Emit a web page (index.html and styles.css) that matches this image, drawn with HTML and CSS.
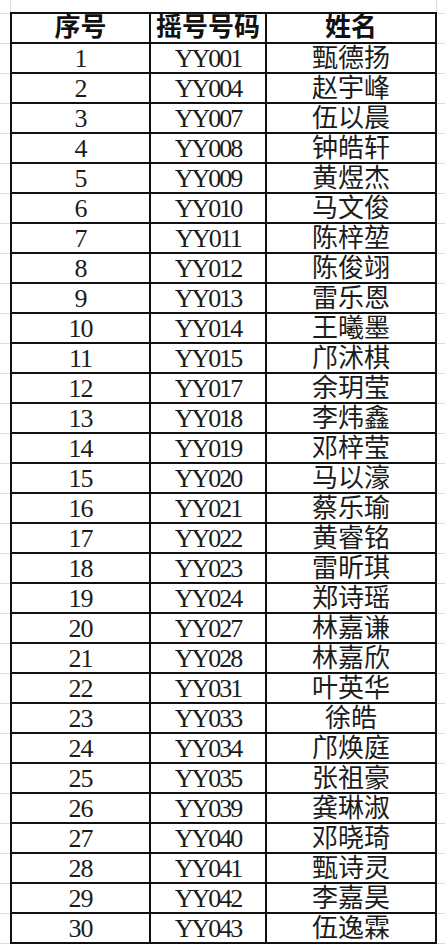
FILE: index.html
```html
<!DOCTYPE html>
<html lang="zh">
<head>
<meta charset="utf-8">
<link rel="stylesheet" href="styles.css">
</head>
<body>
<div class="sheet">
  <div class="roster">
    <div class="cell head">序号</div><div class="cell head">摇号号码</div><div class="cell head">姓名</div>
    <div class="cell num">1</div><div class="cell code">YY001</div><div class="cell name">甄德扬</div>
    <div class="cell num">2</div><div class="cell code">YY004</div><div class="cell name">赵宇峰</div>
    <div class="cell num">3</div><div class="cell code">YY007</div><div class="cell name">伍以晨</div>
    <div class="cell num">4</div><div class="cell code">YY008</div><div class="cell name">钟皓轩</div>
    <div class="cell num">5</div><div class="cell code">YY009</div><div class="cell name">黄煜杰</div>
    <div class="cell num">6</div><div class="cell code">YY010</div><div class="cell name">马文俊</div>
    <div class="cell num">7</div><div class="cell code">YY011</div><div class="cell name">陈梓堃</div>
    <div class="cell num">8</div><div class="cell code">YY012</div><div class="cell name">陈俊翊</div>
    <div class="cell num">9</div><div class="cell code">YY013</div><div class="cell name">雷乐恩</div>
    <div class="cell num">10</div><div class="cell code">YY014</div><div class="cell name">王曦墨</div>
    <div class="cell num">11</div><div class="cell code">YY015</div><div class="cell name">邝沭棋</div>
    <div class="cell num">12</div><div class="cell code">YY017</div><div class="cell name">余玥莹</div>
    <div class="cell num">13</div><div class="cell code">YY018</div><div class="cell name">李炜鑫</div>
    <div class="cell num">14</div><div class="cell code">YY019</div><div class="cell name">邓梓莹</div>
    <div class="cell num">15</div><div class="cell code">YY020</div><div class="cell name">马以濠</div>
    <div class="cell num">16</div><div class="cell code">YY021</div><div class="cell name">蔡乐瑜</div>
    <div class="cell num">17</div><div class="cell code">YY022</div><div class="cell name">黄睿铭</div>
    <div class="cell num">18</div><div class="cell code">YY023</div><div class="cell name">雷昕琪</div>
    <div class="cell num">19</div><div class="cell code">YY024</div><div class="cell name">郑诗瑶</div>
    <div class="cell num">20</div><div class="cell code">YY027</div><div class="cell name">林嘉谦</div>
    <div class="cell num">21</div><div class="cell code">YY028</div><div class="cell name">林嘉欣</div>
    <div class="cell num">22</div><div class="cell code">YY031</div><div class="cell name">叶英华</div>
    <div class="cell num">23</div><div class="cell code">YY033</div><div class="cell name">徐皓</div>
    <div class="cell num">24</div><div class="cell code">YY034</div><div class="cell name">邝焕庭</div>
    <div class="cell num">25</div><div class="cell code">YY035</div><div class="cell name">张祖豪</div>
    <div class="cell num">26</div><div class="cell code">YY039</div><div class="cell name">龚琳淑</div>
    <div class="cell num">27</div><div class="cell code">YY040</div><div class="cell name">邓晓琦</div>
    <div class="cell num">28</div><div class="cell code">YY041</div><div class="cell name">甄诗灵</div>
    <div class="cell num">29</div><div class="cell code">YY042</div><div class="cell name">李嘉昊</div>
    <div class="cell num">30</div><div class="cell code">YY043</div><div class="cell name">伍逸霖</div>
  </div>
</div>
</body>
</html>
```
FILE: styles.css
```css
html, body {
  margin: 0;
  padding: 0;
  background: #fff;
}
.sheet {
  width: 445px;
  height: 944px;
  overflow: hidden;
  padding: 12px 0 0 10px;
  box-sizing: border-box;
  background-color: #fff;
  background-image:
    linear-gradient(to right, transparent 10px, #dcdcdc 10px, #dcdcdc 11px, transparent 11px, transparent 436px, #dcdcdc 436px, #dcdcdc 437px, transparent 437px),
    repeating-linear-gradient(to bottom, #dcdcdc 0, #dcdcdc 1px, transparent 1px, transparent 30px);
  background-position: 0 0, 0 13px;
  background-repeat: no-repeat, repeat-y;
}
.roster {
  display: grid;
  grid-template-columns: 137px 114px 168px;
  grid-auto-rows: 28px;
  gap: 2px;
  padding: 2px;
  width: max-content;
  background: #111;
  font-family: "Liberation Serif", "Noto Sans CJK SC", serif;
  color: #1c1c1c;
}
.cell {
  background: #fff;
  display: flex;
  align-items: center;
  justify-content: center;
  font-size: 26px;
  line-height: 28px;
  white-space: nowrap;
  padding-top: 2px;
  box-sizing: border-box;
}
.head {
  font-weight: 700;
  color: #111;
  padding-top: 0;
}
.num {
  letter-spacing: -1px;
}
.code {
  letter-spacing: -2px;
}
.name {
  font-weight: 400;
}
```
